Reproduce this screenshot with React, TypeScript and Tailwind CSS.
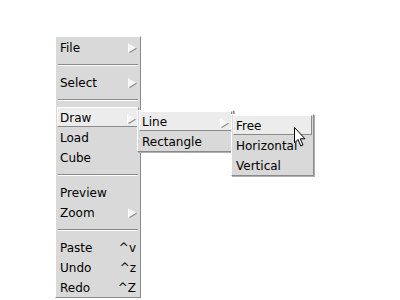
import React from "react";

const font = { fontFamily: '"DejaVu Sans", sans-serif' };

function Arrow() {
  return (
    <svg width="9" height="10" viewBox="0 0 9 10" className="absolute right-[2px] top-[6px]">
      <polygon points="0.5,0.5 8.5,5 0.5,9.5" fill="#f6f6f6" />
      <line x1="0.5" y1="0.5" x2="0.5" y2="9.5" stroke="#ffffff" strokeWidth="1" />
      <line x1="1.5" y1="9.5" x2="8.5" y2="5.2" stroke="#8c8c8c" strokeWidth="1.2" />
    </svg>
  );
}

function Item({
  label,
  arrow,
  accel,
  active,
}: {
  label: string;
  arrow?: boolean;
  accel?: string;
  active?: boolean;
}) {
  return (
    <div
      className={
        "relative flex h-[20px] items-center pr-[3px] text-[12px] text-black " +
        (active
          ? "pt-[1px] pl-[2px] bg-[#ececec] border-t border-l border-t-white border-l-white border-b border-r border-b-[#8a8a8a] border-r-[#8a8a8a]"
          : "pt-[2px] pl-[3px]")
      }
    >
      <span className="flex-1 leading-none">{label}</span>
      {accel && <span className="leading-none">{accel}</span>}
      {arrow && <Arrow />}
    </div>
  );
}

function Sep() {
  return (
    <div className="flex h-[15px] flex-col justify-center px-[1px]">
      <div className="h-px bg-[#8a8a8a]" />
      <div className="h-px bg-white" />
    </div>
  );
}

export default function App() {
  return (
    <div className="relative h-[300px] w-[400px] overflow-hidden bg-white" style={font}>
      {/* main menu */}
      <div className="absolute left-[55px] top-[36px] w-[86px] border border-t-white border-l-white border-r-[#8a8a8a] border-b-[#8a8a8a] bg-[#d9d9d9] px-[1px]">
        <Item label="File" arrow />
        <Sep />
        <Item label="Select" arrow />
        <Sep />
        <Item label="Draw" arrow active />
        <Item label="Load" />
        <Item label="Cube" />
        <Sep />
        <Item label="Preview" />
        <Item label="Zoom" arrow />
        <Sep />
        <Item label="Paste" accel="^v" />
        <Item label="Undo" accel="^z" />
        <Item label="Redo" accel="^Z" />
      </div>

      {/* submenu 1 */}
      <div className="absolute left-[137px] top-[110px] w-[97px] border border-t-white border-l-white border-r-[#8a8a8a] border-b-[#8a8a8a] bg-[#d9d9d9] px-[1px] shadow-[1px_1px_0_#b0b0b0]">
        <Item label="Line" arrow active />
        <Item label="Rectangle" />
      </div>

      {/* submenu 2 */}
      <div className="absolute left-[231px] top-[114px] w-[83px] border border-t-white border-l-white border-r-[#8a8a8a] border-b-[#8a8a8a] bg-[#d9d9d9] px-[1px] shadow-[1px_1px_0_#b0b0b0]">
        <Item label="Free" active />
        <Item label="Horizontal" />
        <Item label="Vertical" />
      </div>

      {/* mouse cursor */}
      <svg
        width="14"
        height="22"
        viewBox="0 0 14 22"
        className="absolute left-[294px] top-[127px]"
      >
        <path
          d="M0.5 0.5 L0.5 16 L4 12.5 L6.8 19 L9 18 L6.3 11.8 L11 11.8 Z"
          fill="#ffffff"
          stroke="#000000"
          strokeWidth="1"
          strokeLinejoin="miter"
        />
      </svg>
    </div>
  );
}
